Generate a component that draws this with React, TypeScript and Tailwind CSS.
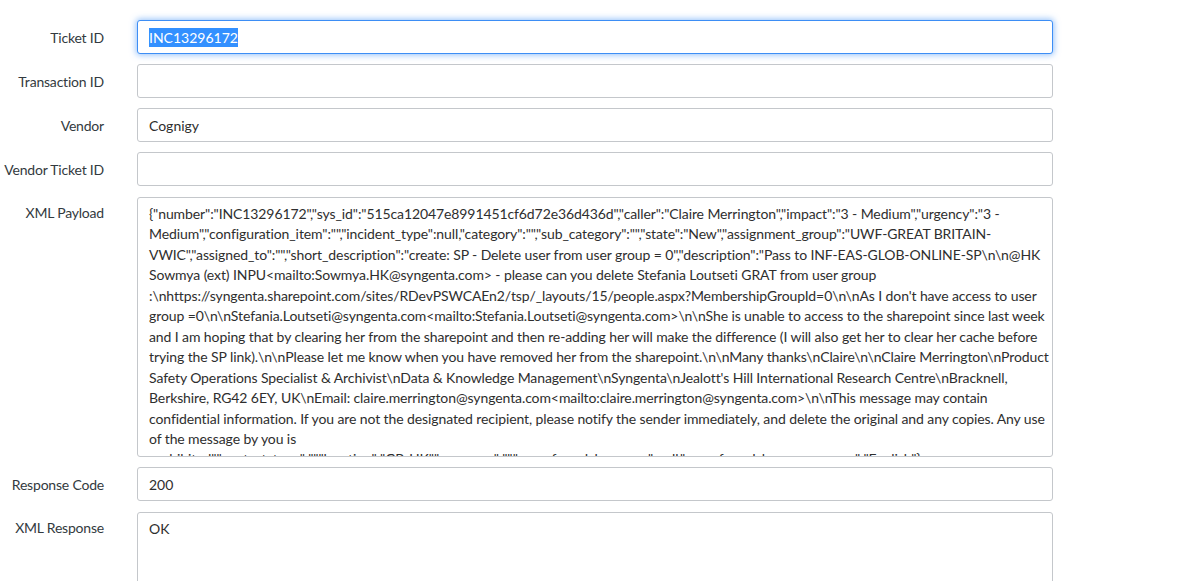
import React from 'react';

const payload = [
  String.raw`{"number":"INC13296172","sys_id":"515ca12047e8991451cf6d72e36d436d","caller":"Claire Merrington","impact":"3 - Medium","urgency":"3 -`,
  String.raw`Medium","configuration_item":"","incident_type":null,"category":"","sub_category":"","state":"New","assignment_group":"UWF-GREAT BRITAIN-`,
  String.raw`VWIC","assigned_to":"","short_description":"create: SP - Delete user from user group = 0","description":"Pass to INF-EAS-GLOB-ONLINE-SP\n\n@HK`,
  String.raw`Sowmya (ext) INPU<mailto:Sowmya.HK@syngenta.com> - please can you delete Stefania Loutseti GRAT from user group`,
  String.raw`:\nhttps://syngenta.sharepoint.com/sites/RDevPSWCAEn2/tsp/_layouts/15/people.aspx?MembershipGroupId=0\n\nAs I don't have access to user`,
  String.raw`group =0\n\nStefania.Loutseti@syngenta.com<mailto:Stefania.Loutseti@syngenta.com>\n\nShe is unable to access to the sharepoint since last week`,
  String.raw`and I am hoping that by clearing her from the sharepoint and then re-adding her will make the difference (I will also get her to clear her cache before`,
  String.raw`trying the SP link).\n\nPlease let me know when you have removed her from the sharepoint.\n\nMany thanks\nClaire\n\nClaire Merrington\nProduct`,
  String.raw`Safety Operations Specialist & Archivist\nData & Knowledge Management\nSyngenta\nJealott's Hill International Research Centre\nBracknell,`,
  String.raw`Berkshire, RG42 6EY, UK\nEmail: claire.merrington@syngenta.com<mailto:claire.merrington@syngenta.com>\n\nThis message may contain`,
  String.raw`confidential information. If you are not the designated recipient, please notify the sender immediately, and delete the original and any copies. Any use`,
  String.raw`of the message by you is`,
  String.raw`prohibited","contact_type":"","location":"GB-UK","company":"","u_preferred_language":null,"u_preferred_language_name":"English"}`,
];

function Label({ children, top = false }: { children: React.ReactNode; top?: boolean }) {
  return (
    <div className={`w-[104px] shrink-0 text-right text-[14px] tracking-[-0.2px] text-[#333a40] whitespace-nowrap ${top ? 'pt-[6px] leading-[20px]' : 'self-center'}`}>
      {children}
    </div>
  );
}

function Field({ label, value }: { label: string; value?: string }) {
  return (
    <div className="flex">
      <Label>{label}</Label>
      <div className="ml-[33px] w-[916px] h-[34px] border border-[#c4c7cb] rounded-[3px] bg-white px-[11px] flex items-center text-[14px] text-[#2e2e2e]">
        {value}
      </div>
    </div>
  );
}

export default function App() {
  return (
    <div className="bg-white pt-[20px] font-['Lato','Liberation_Sans',sans-serif] overflow-hidden h-[581px]">
      <div className="flex flex-col gap-[10px]">
        <div className="flex">
          <Label>Ticket ID</Label>
          <div className="ml-[33px] w-[916px] h-[34px] border border-[#3d8ef5] rounded-[3px] bg-white px-[11px] flex items-center text-[14px] shadow-[0_0_6px_1px_rgba(61,142,245,0.55)]">
            <span className="bg-[#3390ff] text-white leading-[19px]">INC13296172</span>
          </div>
        </div>
        <Field label="Transaction ID" />
        <Field label="Vendor" value="Cognigy" />
        <Field label="Vendor Ticket ID" />
        <div className="flex mt-[1px]">
          <Label top>XML Payload</Label>
          <div className="ml-[33px] w-[916px] h-[260px] border border-[#c4c7cb] rounded-[3px] bg-white pl-[11px] pr-[4px] pt-[6px] overflow-hidden text-[14px] tracking-[-0.1px] leading-[20.45px] text-[#2e2e2e]">
            {payload.map((line, i) => (
              <div key={i} className="whitespace-nowrap">{line}</div>
            ))}
          </div>
        </div>
        <Field label="Response Code" value="200" />
        <div className="flex mt-[1px]">
          <Label top>XML Response</Label>
          <div className="ml-[33px] w-[916px] h-[90px] border border-[#c4c7cb] rounded-[3px] bg-white px-[11px] pt-[6px] text-[14px] leading-[20px] text-[#2e2e2e]">
            OK
          </div>
        </div>
      </div>
    </div>
  );
}
